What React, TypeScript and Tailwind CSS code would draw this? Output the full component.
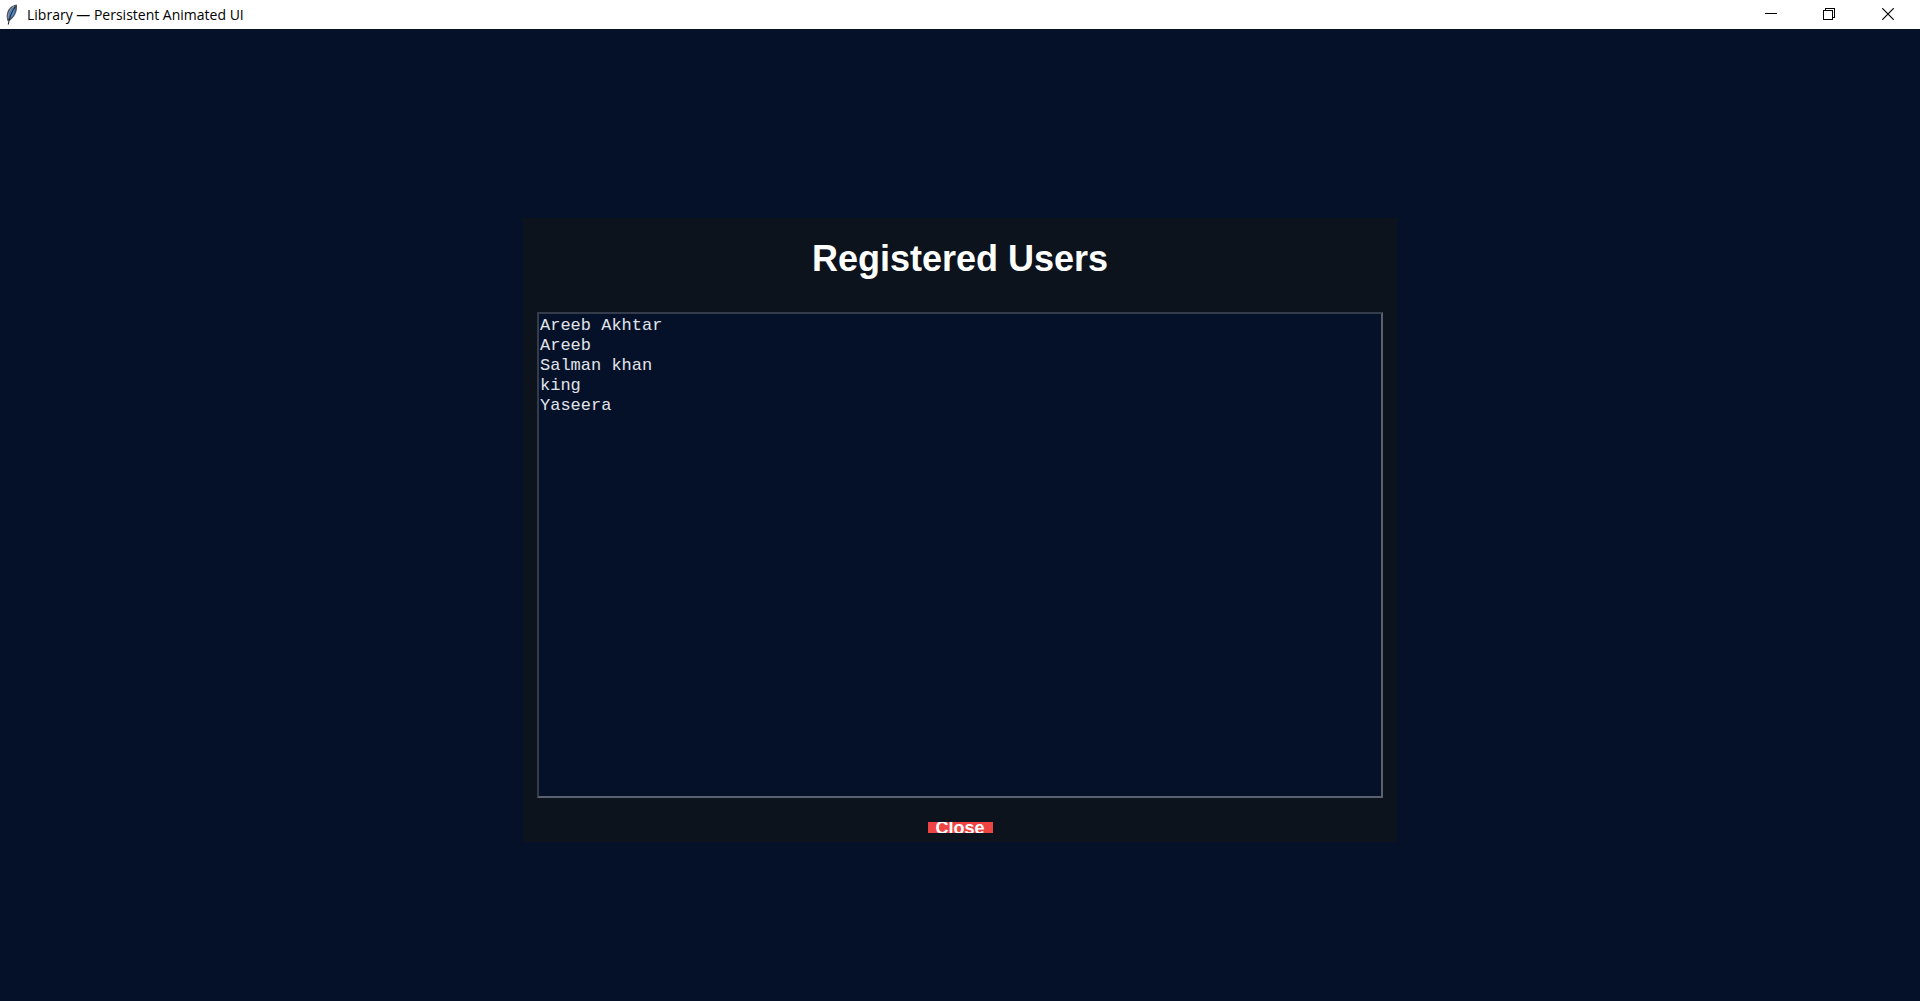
const users = ["Areeb Akhtar", "Areeb", "Salman khan", "king", "Yaseera"];

function Feather() {
  return (
    <svg width="14" height="22" viewBox="0 0 14 22" aria-hidden="true">
      <path d="M2.500 17C.6 12 2 5.500 6.500 2.500C8.500 1.200 10.500.5 11.800.4C12.800 5 11 12 5 16.500Z" fill="#4b535e" />
      <path d="M4 15C3.600 10 5.500 5.500 10.200 2C10.800 7.500 8.800 12.500 4 15Z" fill="#4f8bd0" />
      <path d="M3.200 14.500C3 9.500 5 5 9 2.200" fill="none" stroke="#a9b4c0" strokeWidth=".8" />
      <path d="M10.500 2.500C7.200 7 4.500 12 3.300 20.500" fill="none" stroke="#1c2733" strokeWidth="1.100" />
    </svg>
  );
}

function TitleBar() {
  return (
    <header className="flex h-[29px] shrink-0 items-center bg-white text-black">
      <div className="flex flex-1 items-center gap-2 pl-[5px]">
        <Feather />
        <span className="font-['Open_Sans','Noto_Sans',sans-serif] text-sm leading-5">
          Library — Persistent Animated UI
        </span>
      </div>
      <div className="flex h-[28px] self-start pr-0.5">
        <button type="button" aria-label="Minimize" className="flex w-[58px] items-center justify-center">
          <svg width="12" height="12" viewBox="0 0 12 12" shapeRendering="crispEdges">
            <path d="M0 5.500H12" stroke="#000" fill="none" />
          </svg>
        </button>
        <button type="button" aria-label="Restore" className="flex w-[58px] items-center justify-center">
          <svg width="12" height="12" viewBox="0 0 12 12" shapeRendering="crispEdges">
            <path d="M.5 2.500H9.500V11.500H.5ZM2.500 2.500V.5H11.500V9.500H9.500" stroke="#000" fill="none" />
          </svg>
        </button>
        <button type="button" aria-label="Close window" className="flex w-[60px] items-center justify-center">
          <svg width="12" height="12" viewBox="0 0 12 12">
            <path d="M.3.3L11.700 11.700M11.700.3L.3 11.700" stroke="#000" strokeWidth="1.200" fill="none" />
          </svg>
        </button>
      </div>
    </header>
  );
}

export default function App() {
  return (
    <div className="flex min-h-screen flex-col bg-[#051128]">
      <TitleBar />
      <main className="flex flex-1 flex-col items-center justify-center px-4 pt-[30px]">
        <section className="flex w-full max-w-[874px] flex-col items-center bg-[#0c131d] px-3.5 pt-[18px] pb-[9px] font-['Liberation_Sans',Arial,sans-serif]">
          <h1 className="text-4xl leading-[46px] font-bold text-white">Registered Users</h1>
          <ul className="mt-[30px] min-h-[486px] w-full border-2 border-t-[#343b4a] border-r-[#5a606d] border-b-[#5a606d] border-l-[#343b4a] bg-[#051128] px-px pt-0.5 font-['Liberation_Mono','Courier_New',monospace] text-[17px] leading-5 text-[#e0e4ea]">
            {users.map((user) => (
              <li key={user}>{user}</li>
            ))}
          </ul>
          <button
            type="button"
            className="mt-6 flex h-[11px] w-[65px] items-center justify-center overflow-hidden bg-[#ef4444] text-lg leading-5 font-bold text-white"
          >
            Close
          </button>
        </section>
      </main>
    </div>
  );
}
